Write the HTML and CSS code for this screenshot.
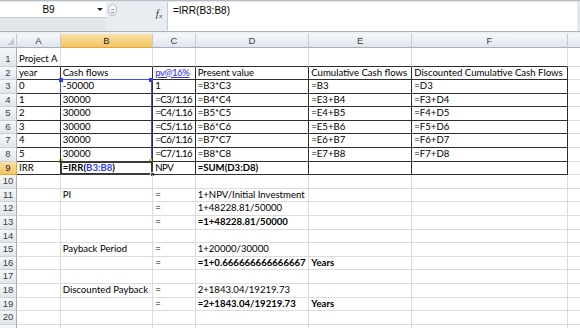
FILE: index.html
```html
<!DOCTYPE html>
<html lang="en">
<head>
    <meta charset="UTF-8">
    <title>Project A - IRR</title>
    <link rel="stylesheet" href="styles.css">
</head>
<body>
    <div class="formula-bar">
        <div class="name-col">
            <div class="name-box">
                <span class="name">B9</span>
                <span class="arrow"></span>
            </div>
        </div>
        <div class="tools">
            <span class="splitter"></span>
            <span class="fx"><i>f</i><sub>x</sub></span>
        </div>
        <div class="formula">=IRR(B3:B8)</div>
        <div class="bar-end"></div>
    </div>

    <div class="sheet" id="sheet">
        <div class="corner"><span class="tri"></span></div>
        <div class="col-head">A</div>
        <div class="col-head active-head">B</div>
        <div class="col-head">C</div>
        <div class="col-head">D</div>
        <div class="col-head">E</div>
        <div class="col-head">F</div>
        <div class="col-head"></div>
    </div>

    <script>
        const cols = ['A', 'B', 'C', 'D', 'E', 'F', 'G'];
        const data = {
            1: { A: 'Project A' },
            2: { A: 'year', B: 'Cash flows', C: '<span class="link">pv@16%</span>', D: 'Present value', E: 'Cumulative Cash flows', F: 'Discounted Cumulative Cash Flows' },
            3: { A: '0', B: '-50000', C: '1', D: '=B3*C3', E: '=B3', F: '=D3' },
            4: { A: '1', B: '30000', C: '=C3/1.16', D: '=B4*C4', E: '=E3+B4', F: '=F3+D4' },
            5: { A: '2', B: '30000', C: '=C4/1.16', D: '=B5*C5', E: '=E4+B5', F: '=F4+D5' },
            6: { A: '3', B: '30000', C: '=C5/1.16', D: '=B6*C6', E: '=E5+B6', F: '=F5+D6' },
            7: { A: '4', B: '30000', C: '=C6/1.16', D: '=B7*C7', E: '=E6+B7', F: '=F6+D7' },
            8: { A: '5', B: '30000', C: '=C7/1.16', D: '=B8*C8', E: '=E7+B8', F: '=F7+D8' },
            9: { A: 'IRR', B: '<b>=IRR(<span class="ref">B3:B8</span>)</b>', C: 'NPV', D: '<b>=SUM(D3:D8)</b>' },
            11: { B: 'PI', C: '=', D: '1+NPV/Initial Investment' },
            12: { C: '=', D: '1+48228.81/50000' },
            13: { C: '=', D: '<b>=1+48228.81/50000</b>' },
            15: { B: 'Payback Period', C: '=', D: '1+20000/30000' },
            16: { C: '=', D: '<b>=1+0.666666666666667</b>', E: '<b>Years</b>' },
            18: { B: 'Discounted Payback', C: '=', D: '2+1843.04/19219.73' },
            19: { C: '=', D: '<b>=2+1843.04/19219.73</b>', E: '<b>Years</b>' }
        };

        const sheet = document.getElementById('sheet');

        for (let r = 1; r <= 21; r++) {
            const head = document.createElement('div');
            head.className = 'row-head' + (r === 9 ? ' active-head' : '');
            head.textContent = r;
            sheet.appendChild(head);

            cols.forEach((c, i) => {
                const cell = document.createElement('div');
                cell.className = 'cell col-' + c;
                const inTable = i < 6;
                if (inTable && r >= 2 && r <= 9) cell.classList.add('boxed');
                if (inTable && r === 1) cell.classList.add('box-top');
                const value = (data[r] || {})[c];
                if (value) cell.innerHTML = value;

                // range finder for B3:B8 and the active cell B9
                if (c === 'B' && r === 3) {
                    cell.insertAdjacentHTML('beforeend', '<span class="range"><span class="dot tl"></span><span class="dot tr"></span><span class="dot bl"></span><span class="dot br"></span></span>');
                }
                if (c === 'B' && r === 9) {
                    cell.insertAdjacentHTML('beforeend', '<span class="active-cell"><span class="handle"></span></span>');
                }
                sheet.appendChild(cell);
            });
        }
    </script>
</body>
</html>
```

FILE: styles.css
```css
* {
    margin: 0;
    padding: 0;
    box-sizing: border-box;
}

body {
    width: 580px;
    height: 328px;
    overflow: hidden;
    background: #ffffff;
    font-family: 'Lato', 'Liberation Sans', sans-serif;
    font-size: 9.6px;
    color: #000000;
}

/* formula bar */

.formula-bar {
    display: flex;
    height: 34px;
    background: #e3e7ec;
    border-top: 1px solid #b6bec8;
    border-bottom: 2px solid #eef1f4;
    padding-top: 1px;
}

.name-col {
    width: 106px;
    border-bottom: 1px solid #a9b2bd;
}

.name-box {
    display: flex;
    align-items: center;
    height: 16px;
    background: #ffffff;
    border-bottom: 1px solid #c4cbd4;
}

.name-box .name {
    flex: 1;
    text-align: center;
    font-family: 'Liberation Sans', sans-serif;
    font-size: 10px;
}

.name-box .arrow {
    width: 0;
    height: 0;
    margin-right: 3px;
    border-left: 3px solid transparent;
    border-right: 3px solid transparent;
    border-top: 3px solid #222222;
}

.tools {
    display: flex;
    justify-content: space-between;
    width: 61px;
    padding: 2px 5px 0 2px;
    background: #e9ecf0;
    border-bottom: 1px solid #a9b2bd;
}

.splitter {
    width: 9px;
    height: 12px;
    border: 1px solid #b7bfc9;
    border-radius: 5px;
    background: linear-gradient(#ffffff, #e2e6eb);
    position: relative;
}

.splitter::after {
    content: '';
    position: absolute;
    left: 2px;
    top: 4px;
    width: 3px;
    height: 2px;
    border-top: 1px solid #9aa3ae;
    border-bottom: 1px solid #9aa3ae;
}

.fx {
    font-family: 'Liberation Serif', serif;
    font-size: 11px;
    color: #333333;
    padding-top: 4px;
    line-height: 1;
}

.fx sub {
    font-size: 7px;
    font-style: italic;
    vertical-align: -1px;
}

.formula {
    flex: 1;
    background: #ffffff;
    border-left: 1px solid #c4cbd4;
    border-bottom: 1px solid #a9b2bd;
    padding: 3px 0 0 5px;
    font-family: 'Liberation Sans', sans-serif;
    font-size: 10px;
}

.bar-end {
    width: 3px;
    border-bottom: 1px solid #a9b2bd;
}

/* grid */

.sheet {
    display: grid;
    grid-template-columns: 17px 43.7px 92.6px 42.4px 113.6px 103px 155.4px 20px;
    grid-template-rows: 14px 18.5px;
    grid-auto-rows: 13.6px;
    height: 294px;
    overflow: hidden;
}

.corner,
.col-head,
.row-head {
    background: linear-gradient(#f6f8fa, #e1e6ec);
    border-right: 1px solid #c3cad3;
    border-bottom: 1px solid #a4b1c0;
    color: #3c3c3c;
    text-align: center;
    font-family: 'Liberation Sans', sans-serif;
    font-size: 9.5px;
}

.col-head {
    line-height: 13px;
}

.row-head {
    display: flex;
    align-items: flex-end;
    justify-content: center;
    line-height: 12.6px;
    border-bottom-color: #c8d0da;
    border-right-color: #a4b1c0;
}

.corner {
    position: relative;
}

.corner .tri {
    position: absolute;
    right: 2px;
    bottom: 2px;
    width: 0;
    height: 0;
    border-left: 7px solid transparent;
    border-bottom: 7px solid #c3c9d1;
}

.active-head {
    background: linear-gradient(#fbe2a8, #f3c462);
    border-bottom-color: #e5a63b;
    color: #222222;
}

.row-head.active-head {
    border-right-color: #e5a63b;
}

.cell {
    position: relative;
    display: flex;
    align-items: flex-end;
    padding-left: 2px;
    line-height: 12.6px;
    white-space: nowrap;
    border-right: 1px solid #dadcdd;
    border-bottom: 1px solid #dadcdd;
}

.cell.col-C {
    letter-spacing: -0.5px;
}

.cell.boxed {
    border-right-color: #2e2e2e;
    border-bottom-color: #2e2e2e;
}

.cell.box-top {
    border-bottom-color: #2e2e2e;
}

.link {
    color: #2a2aff;
    text-decoration: underline;
}

.ref {
    color: #2a3cff;
}

/* selection overlays */

.range {
    position: absolute;
    left: -1px;
    top: -1px;
    right: 0;
    height: 82.6px;
    border: 1px solid #4150f0;
    pointer-events: none;
}

.dot {
    position: absolute;
    width: 4px;
    height: 4px;
    background: #2f3fe8;
}

.dot.tl { left: -2px; top: -2px; }
.dot.tr { right: -2px; top: -2px; }
.dot.bl { left: -2px; bottom: -2px; background: #d9c24a; }
.dot.br { right: -2px; bottom: -2px; background: #d9c24a; }

.active-cell {
    position: absolute;
    left: -1px;
    top: -1px;
    right: -1px;
    bottom: -1px;
    border: 2px solid #3a3a3a;
    pointer-events: none;
}

.handle {
    position: absolute;
    right: -4px;
    bottom: -4px;
    width: 5px;
    height: 5px;
    background: #3a3a3a;
    border: 1px solid #ffffff;
}
```
